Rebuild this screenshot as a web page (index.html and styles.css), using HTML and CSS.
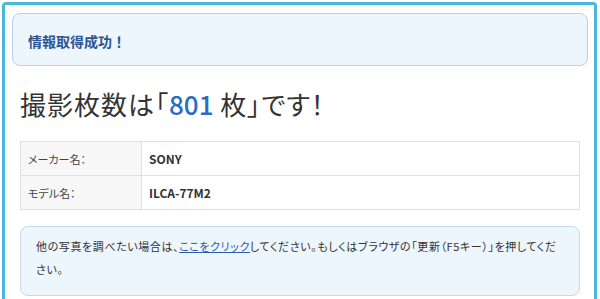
FILE: index.html
```html
<!DOCTYPE html>
<html lang="ja">
<head>
<meta charset="utf-8">
<link rel="stylesheet" href="styles.css">
</head>
<body>
<div class="frame">
  <div class="alert">情報取得成功！</div>
  <div class="content">
    <h1 class="count">撮影枚数は「<span class="num">801</span> 枚」です！</h1>
    <table class="info">
      <tr><th>メーカー名：</th><td>SONY</td></tr>
      <tr><th>モデル名：</th><td>ILCA-77M2</td></tr>
    </table>
    <div class="note">他の写真を調べたい場合は、<a href="#">ここをクリック</a>してください。もしくはブラウザの「更新（F5キー）」を押してください。</div>
  </div>
</div>
</body>
</html>
```

FILE: styles.css
```css
html, body {
  margin: 0;
  padding: 0;
  background: #fff;
}
body {
  font-family: "Noto Sans CJK JP", "Noto Sans", sans-serif;
  color: #333;
}
.frame {
  margin: 2px 3px 0 2px;
  border: 3px solid #4bb7de;
  border-bottom: none;
  border-radius: 4px 4px 0 0;
  padding: 8px 6px 0 7px;
  height: 300px;
  box-sizing: border-box;
}
.alert {
  background: #edf5fd;
  border: 1px solid #bccfe2;
  border-radius: 8px;
  height: 53px;
  box-sizing: border-box;
  padding: 3px 15px 0;
  display: flex;
  align-items: center;
  font-size: 14px;
  font-weight: bold;
  color: #2d5492;
}
.content {
  padding: 0 8px;
}
.count {
  margin: 21px 0 20px;
  font-size: 26px;
  font-weight: normal;
  line-height: 34px;
  color: #333;
  letter-spacing: 1px;
  font-feature-settings: "palt";
}
.num {
  color: #2c6cc3;
  font-weight: 500;
  letter-spacing: 0;
}
.info {
  width: 100%;
  border-collapse: collapse;
  font-size: 12px;
}
.info th, .info td {
  border: 1px solid #e0e0e0;
  height: 33px;
  padding: 0 7px;
  text-align: left;
}
.info th {
  width: 106px;
  background: #f7f7f7;
  font-weight: normal;
  font-size: 11px;
  color: #444;
  font-feature-settings: "palt";
}
.info td {
  font-weight: bold;
  background: #fff;
}
.note {
  margin-top: 16px;
  background: #edf5fd;
  border: 1px solid #c8d8e6;
  border-radius: 8px;
  padding: 8px 15px 14px 15px;
  font-size: 11px;
  line-height: 23px;
  letter-spacing: 0.6px;
  font-feature-settings: "palt";
}
.note a {
  color: #2a5cab;
  text-decoration: underline;
}
```
